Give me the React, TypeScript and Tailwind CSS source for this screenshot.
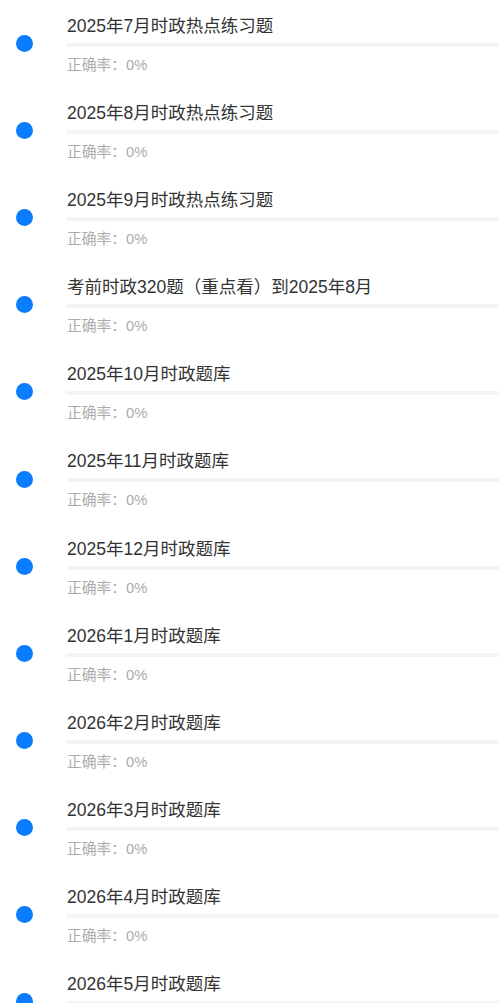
const items = [
  "2025年7月时政热点练习题",
  "2025年8月时政热点练习题",
  "2025年9月时政热点练习题",
  "考前时政320题（重点看）到2025年8月",
  "2025年10月时政题库",
  "2025年11月时政题库",
  "2025年12月时政题库",
  "2026年1月时政题库",
  "2026年2月时政题库",
  "2026年3月时政题库",
  "2026年4月时政题库",
  "2026年5月时政题库",
];

const App = () => {
  return (
    <div
      className="w-[499px] h-[1003px] overflow-hidden bg-white"
      style={{ fontFamily: '"Liberation Sans", "Noto Sans CJK SC", sans-serif' }}
    >
      {items.map((title) => (
        <div key={title} className="flex items-center h-[87.1px]">
          <div className="ml-4 w-[17px] h-[17px] rounded-full bg-[#0a7cfe] shrink-0" />
          <div className="ml-[34px] flex-1 flex flex-col self-start pt-[14px]">
            <div className="text-[17.5px] leading-6 text-[#333]">{title}</div>
            <div className="mt-[5px] h-1 bg-[#f4f4f4]" />
            <div className="mt-2 text-[14.75px] leading-5 text-[#ababab]">正确率：0%</div>
          </div>
        </div>
      ))}
    </div>
  );
};

export default App;
